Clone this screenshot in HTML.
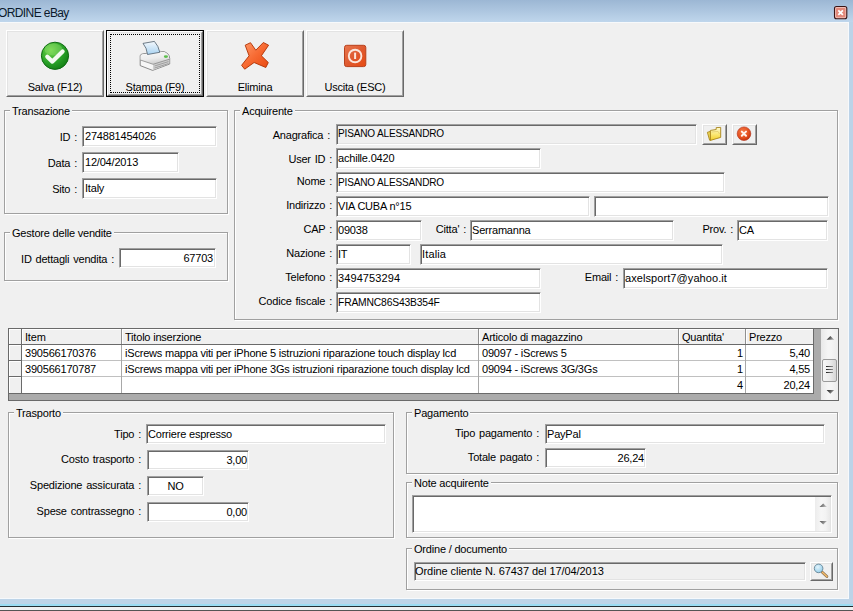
<!DOCTYPE html>
<html><head><meta charset="utf-8">
<style>
*{box-sizing:border-box;margin:0;padding:0}
html,body{width:853px;height:611px;overflow:hidden;background:#f0f0f0}
body{position:relative;font-family:"Liberation Sans",sans-serif;font-size:11px;color:#000;line-height:13px;letter-spacing:-0.2px}
.a{position:absolute}
#title{left:0;top:0;width:853px;height:22px;background:linear-gradient(#9cb7d4,#bfd6ec)}
#ttext{left:-2px;top:6px;font-size:12px;line-height:15px;color:#0c1a2c;letter-spacing:-0.6px;white-space:nowrap}
#close{left:834px;top:6px;width:14px;height:13px;border:1px solid #3a1a1a;border-radius:2px;background:linear-gradient(#f2b5ad,#d9807a)}
#rb{left:849px;top:22px;width:4px;height:589px;background:#bcd3e8;box-shadow:-1px 0 0 #f6f9fc}
#bb{left:0;top:599px;width:853px;height:12px;background:linear-gradient(#bdd4e8 0,#bdd4e8 5px,#9bdcf3 5px,#9bdcf3 7px,#222e33 7px,#222e33 8px,#eef0f2 8px,#eef0f2 11px,#555 11px)}
.btn{position:absolute;border-top:1px solid #fff;border-left:1px solid #fff;border-right:1px solid #696969;border-bottom:1px solid #696969;background:#f0f0f0}
.btn::after{content:"";position:absolute;left:0;top:0;right:0;bottom:0;border:1px solid;border-color:#e3e3e3 #a0a0a0 #a0a0a0 #e3e3e3}
.btxt{position:absolute;left:0;right:0;top:50px;text-align:center;white-space:nowrap}
.grp{position:absolute;border:1px solid #a0a0a0;box-shadow:inset 1px 1px 0 #fff,1px 1px 0 #fff}
.gt{position:absolute;top:-6px;background:#f0f0f0;padding:0 2px 0 2px;white-space:nowrap;line-height:13px}
.f{position:absolute;background:#fff;border:1px solid;border-color:#a0a0a0 #fff #fff #a0a0a0;box-shadow:inset 1px 1px 0 #696969,inset -1px -1px 0 #e3e3e3;white-space:nowrap;overflow:hidden;padding:3px 0 0 1px;line-height:13px}
.f.p2{padding-top:2px}
.f.g{background:#f0f0f0}
.f.r{text-align:right;padding-right:2px;padding-left:0}
.gc{position:absolute;white-space:nowrap}
.l{position:absolute;white-space:nowrap;text-align:right;word-spacing:1px}
</style></head><body>
<div id="title" class="a"></div>
<div id="ttext" class="a">ORDINE eBay</div>
<div id="rb" class="a"></div>
<div class="a" style="left:0;top:22px;width:849px;height:1px;background:#f7f9fb"></div>
<div id="bb" class="a"></div>
<div class="a" style="left:0;top:598px;width:849px;height:1px;background:#f6f9fc"></div>

<!-- toolbar -->
<div class="btn" style="left:6px;top:30px;width:98px;height:67px"><div class="btxt">Salva (F12)</div></div>
<div class="a" style="left:106px;top:30px;width:98px;height:67px;border:1px solid #000"></div>
<div class="btn" style="left:107px;top:31px;width:96px;height:65px"><div class="btxt" style="top:49px">Stampa (F9)</div></div>
<div class="a" style="left:110px;top:34px;width:90px;height:59px;border:1px dotted #000"></div>
<div class="btn" style="left:206px;top:30px;width:98px;height:67px"><div class="btxt">Elimina</div></div>
<div class="btn" style="left:306px;top:30px;width:98px;height:67px"><div class="btxt">Uscita (ESC)</div></div>

<!-- Transazione -->
<div class="grp" style="left:4px;top:110px;width:224px;height:104px"><div class="gt" style="left:5px">Transazione</div></div>
<div class="l" style="right:776px;top:131px">ID :</div>
<div class="f" style="left:82px;top:126px;width:135px;height:21px;padding-left:2px">274881454026</div>
<div class="l" style="right:776px;top:157px">Data :</div>
<div class="f" style="left:82px;top:152px;width:97px;height:21px;padding-left:2px">12/04/2013</div>
<div class="l" style="right:776px;top:183px">Sito :</div>
<div class="f" style="left:82px;top:178px;width:135px;height:21px;padding-left:2px">Italy</div>

<div class="grp" style="left:4px;top:232px;width:224px;height:49px"><div class="gt" style="left:5px">Gestore delle vendite</div></div>
<div class="l" style="right:739px;top:253px">ID dettagli vendita :</div>
<div class="f r" style="left:119px;top:248px;width:97px;height:20px">67703</div>

<!-- Acquirente -->
<div class="grp" style="left:234px;top:110px;width:604px;height:210px"><div class="gt" style="left:5px">Acquirente</div></div>
<div class="l" style="right:523px;top:129px">Anagrafica :</div>
<div class="f g p2" style="left:336px;top:124px;width:361px;height:21px"><span style="display:inline-block;transform:scaleX(0.915);transform-origin:0 0">PISANO ALESSANDRO</span></div>
<div class="btn" style="left:702px;top:124px;width:25px;height:21px"></div>
<div class="btn" style="left:732px;top:124px;width:25px;height:21px"></div>
<div class="l" style="right:521px;top:153px">User ID :</div>
<div class="f" style="left:336px;top:148px;width:205px;height:21px">achille.0420</div>
<div class="l" style="right:521px;top:175px">Nome :</div>
<div class="f" style="left:336px;top:172px;width:389px;height:21px"><span style="display:inline-block;transform:scaleX(0.915);transform-origin:0 0">PISANO ALESSANDRO</span></div>
<div class="l" style="right:521px;top:199px">Indirizzo :</div>
<div class="f" style="left:336px;top:196px;width:254px;height:21px">VIA CUBA n°15</div>
<div class="f" style="left:594px;top:196px;width:235px;height:21px"></div>
<div class="l" style="right:521px;top:223px">CAP :</div>
<div class="f" style="left:336px;top:220px;width:86px;height:21px">09038</div>
<div class="l" style="right:387px;top:223px">Citta' :</div>
<div class="f" style="left:470px;top:220px;width:204px;height:21px">Serramanna</div>
<div class="l" style="right:120px;top:223px">Prov. :</div>
<div class="f" style="left:737px;top:220px;width:91px;height:21px">CA</div>
<div class="l" style="right:521px;top:247px">Nazione :</div>
<div class="f" style="left:336px;top:244px;width:75px;height:21px">IT</div>
<div class="f" style="left:420px;top:244px;width:303px;height:21px;letter-spacing:0.15px">Italia</div>
<div class="l" style="right:521px;top:271px">Telefono :</div>
<div class="f" style="left:336px;top:268px;width:205px;height:21px;letter-spacing:0.1px">3494753294</div>
<div class="l" style="right:235px;top:271px">Email :</div>
<div class="f" style="left:623px;top:268px;width:205px;height:21px;letter-spacing:0.08px">axelsport7@yahoo.it</div>
<div class="l" style="right:521px;top:295px">Codice fiscale :</div>
<div class="f" style="left:336px;top:292px;width:205px;height:21px"><span style="display:inline-block;transform:scaleX(0.94);transform-origin:0 0">FRAMNC86S43B354F</span></div>

<!-- grid -->
<div class="a" style="left:8px;top:328px;width:831px;height:73px;border:1px solid #6a6a6a;background:#ababab"></div>
<div class="a" style="left:9px;top:329px;width:805px;height:65px;background:#fff"></div>
<div class="a" style="left:9px;top:329px;width:804px;height:15px;background:#f0f0f0"></div>
<div class="a" style="left:9px;top:329px;width:12px;height:64px;background:#f0f0f0"></div>
<div class="a" style="left:9px;top:329px;width:804px;height:1px;background:#fff"></div>
<div class="a" style="left:9px;top:329px;width:1px;height:64px;background:#fff"></div>
<div class="a" style="left:9px;top:345px;width:12px;height:1px;background:#fff"></div>
<div class="a" style="left:9px;top:361px;width:12px;height:1px;background:#fff"></div>
<div class="a" style="left:9px;top:377px;width:12px;height:1px;background:#fff"></div>
<div class="a" style="left:22px;top:329px;width:1px;height:15px;background:#fff"></div>
<div class="a" style="left:122px;top:329px;width:1px;height:15px;background:#fff"></div>
<div class="a" style="left:479px;top:329px;width:1px;height:15px;background:#fff"></div>
<div class="a" style="left:679px;top:329px;width:1px;height:15px;background:#fff"></div>
<div class="a" style="left:746px;top:329px;width:1px;height:15px;background:#fff"></div>
<div class="a" style="left:22px;top:360px;width:791px;height:1px;background:#c0c0c0"></div>
<div class="a" style="left:22px;top:376px;width:791px;height:1px;background:#c0c0c0"></div>
<div class="a" style="left:121px;top:345px;width:1px;height:48px;background:#a8a8a8"></div>
<div class="a" style="left:478px;top:345px;width:1px;height:48px;background:#a8a8a8"></div>
<div class="a" style="left:678px;top:345px;width:1px;height:48px;background:#a8a8a8"></div>
<div class="a" style="left:745px;top:345px;width:1px;height:48px;background:#a8a8a8"></div>
<div class="a" style="left:121px;top:329px;width:1px;height:15px;background:#909090"></div>
<div class="a" style="left:478px;top:329px;width:1px;height:15px;background:#909090"></div>
<div class="a" style="left:678px;top:329px;width:1px;height:15px;background:#909090"></div>
<div class="a" style="left:745px;top:329px;width:1px;height:15px;background:#909090"></div>
<div class="a" style="left:9px;top:344px;width:804px;height:1px;background:#6a6a6a"></div>
<div class="a" style="left:9px;top:360px;width:12px;height:1px;background:#6a6a6a"></div>
<div class="a" style="left:9px;top:376px;width:12px;height:1px;background:#6a6a6a"></div>
<div class="a" style="left:21px;top:329px;width:1px;height:64px;background:#6a6a6a"></div>
<div class="a" style="left:813px;top:329px;width:1px;height:65px;background:#6a6a6a"></div>
<div class="a" style="left:9px;top:393px;width:805px;height:1px;background:#6a6a6a"></div>
<div class="a" style="left:821px;top:329px;width:17px;height:71px;background:linear-gradient(90deg,#e9e9e9,#f5f5f5 40%,#f5f5f5 60%,#ececec)"></div>
<div class="a" style="left:822px;top:359px;width:15px;height:23px;border:1px solid #9b9b9b;border-radius:2px;background:linear-gradient(90deg,#f6f6f6,#ececec 50%,#d6d6d6)"></div>
<div class="a" style="left:826px;top:366px;width:7px;height:1px;background:linear-gradient(90deg,#202020,#909090)"></div>
<div class="a" style="left:826px;top:369px;width:7px;height:1px;background:linear-gradient(90deg,#202020,#909090)"></div>
<div class="a" style="left:826px;top:372px;width:7px;height:1px;background:linear-gradient(90deg,#202020,#909090)"></div>
<div class="gc" style="left:25px;top:331px">Item</div>
<div class="gc" style="left:125px;top:331px">Titolo inserzione</div>
<div class="gc" style="left:482px;top:331px">Articolo di magazzino</div>
<div class="gc" style="left:682px;top:331px">Quantita'</div>
<div class="gc" style="left:749px;top:331px">Prezzo</div>
<div class="gc" style="left:25px;top:347px">390566170376</div>
<div class="gc" style="left:125px;top:347px">iScrews mappa viti per iPhone 5 istruzioni riparazione touch display lcd</div>
<div class="gc" style="left:482px;top:347px">09097 - iScrews 5</div>
<div class="gc" style="right:110px;top:347px">1</div>
<div class="gc" style="right:43px;top:347px">5,40</div>
<div class="gc" style="left:25px;top:363px">390566170787</div>
<div class="gc" style="left:125px;top:363px">iScrews mappa viti per iPhone 3Gs istruzioni riparazione touch display lcd</div>
<div class="gc" style="left:482px;top:363px">09094 - iScrews 3G/3Gs</div>
<div class="gc" style="right:110px;top:363px">1</div>
<div class="gc" style="right:43px;top:363px">4,55</div>
<div class="gc" style="right:110px;top:379px">4</div>
<div class="gc" style="right:43px;top:379px">20,24</div>
<!-- Trasporto -->
<div class="grp" style="left:8px;top:412px;width:386px;height:126px"><div class="gt" style="left:5px">Trasporto</div></div>
<div class="l" style="right:712px;top:428px">Tipo :</div>
<div class="f" style="left:146px;top:424px;width:240px;height:20px">Corriere espresso</div>
<div class="l" style="right:712px;top:453px">Costo trasporto :</div>
<div class="f r" style="left:147px;top:450px;width:102px;height:20px;padding-right:1px">3,00</div>
<div class="l" style="right:712px;top:479px">Spedizione assicurata :</div>
<div class="f" style="left:147px;top:476px;width:57px;height:20px;text-align:center;padding-left:0">NO</div>
<div class="l" style="right:712px;top:505px">Spese contrassegno :</div>
<div class="f r" style="left:147px;top:502px;width:102px;height:20px;padding-right:1px">0,00</div>

<!-- Pagamento -->
<div class="grp" style="left:406px;top:412px;width:432px;height:62px"><div class="gt" style="left:5px">Pagamento</div></div>
<div class="l" style="right:314px;top:427px">Tipo pagamento :</div>
<div class="f" style="left:545px;top:424px;width:280px;height:20px">PayPal</div>
<div class="l" style="right:314px;top:451px">Totale pagato :</div>
<div class="f r" style="left:545px;top:448px;width:101px;height:20px;padding-right:1px">26,24</div>

<!-- Note -->
<div class="grp" style="left:406px;top:482px;width:432px;height:56px"><div class="gt" style="left:5px">Note acquirente</div></div>
<div class="f" style="left:412px;top:495px;width:420px;height:38px"></div>
<div class="a" style="left:815px;top:497px;width:15px;height:34px;background:linear-gradient(90deg,#ececec,#f6f6f6 40%,#f3f3f3 70%,#e8e8e8)"></div>

<!-- Ordine -->
<div class="grp" style="left:406px;top:548px;width:432px;height:42px"><div class="gt" style="left:5px">Ordine / documento</div></div>
<div class="f g p2" style="left:414px;top:562px;width:392px;height:19px;padding-left:0;letter-spacing:-0.07px">Ordine cliente N. 67437 del 17/04/2013</div>
<div class="btn" style="left:810px;top:562px;width:23px;height:19px"></div>
<svg class="a" style="left:0;top:0" width="853" height="611" viewBox="0 0 853 611">
<defs>
<linearGradient id="garr" x1="0" y1="0" x2="1" y2="0.3"><stop offset="0" stop-color="#1e1e1e"/><stop offset="0.5" stop-color="#555"/><stop offset="1" stop-color="#a8a8a8"/></linearGradient>
<radialGradient id="gck" cx="0.35" cy="0.3" r="0.8"><stop offset="0" stop-color="#74d84a"/><stop offset="0.55" stop-color="#2ca42a"/><stop offset="1" stop-color="#0f7a12"/></radialGradient>
<linearGradient id="gx" x1="0" y1="0" x2="1" y2="1"><stop offset="0" stop-color="#ff9a6a"/><stop offset="0.5" stop-color="#f76a32"/><stop offset="1" stop-color="#e84810"/></linearGradient>
<linearGradient id="gpw" x1="0" y1="0" x2="1" y2="1"><stop offset="0" stop-color="#e8774f"/><stop offset="0.5" stop-color="#df5a30"/><stop offset="1" stop-color="#e84a10"/></linearGradient>
<linearGradient id="gpap" x1="0" y1="0" x2="0" y2="1"><stop offset="0" stop-color="#f4f8fc"/><stop offset="1" stop-color="#a9d3f2"/></linearGradient>
<linearGradient id="gtop" x1="0" y1="0" x2="0.3" y2="1"><stop offset="0" stop-color="#fafafa"/><stop offset="0.6" stop-color="#ececec"/><stop offset="1" stop-color="#d0d0d0"/></linearGradient>
<linearGradient id="gfold" x1="0" y1="0" x2="0" y2="1"><stop offset="0" stop-color="#fffbd0"/><stop offset="0.5" stop-color="#fbe97a"/><stop offset="1" stop-color="#f2cf2a"/></linearGradient>
<radialGradient id="grc" cx="0.4" cy="0.35" r="0.75"><stop offset="0" stop-color="#f47a48"/><stop offset="0.6" stop-color="#e4501e"/><stop offset="1" stop-color="#b8280a"/></radialGradient>
<radialGradient id="glens" cx="0.4" cy="0.35" r="0.7"><stop offset="0" stop-color="#e2f4fc"/><stop offset="1" stop-color="#92cdea"/></radialGradient>
</defs>
<!-- check -->
<circle cx="55" cy="55.8" r="13.6" fill="url(#gck)" stroke="#0f6a12" stroke-width="1"/>
<ellipse cx="53.5" cy="49.5" rx="9" ry="6" fill="#9be57a" opacity="0.35"/>
<path d="M47.3 56.8 L52.4 61.6 L62.6 51.4" fill="none" stroke="#f4faf2" stroke-width="4.2" stroke-linecap="round" stroke-linejoin="round"/>
<!-- printer -->
<path d="M140.2 55.8 Q140.4 54.2 142.6 53.9 L160.3 51.4 Q165.2 51 167.6 53.6 Q169.6 55.6 169.7 58.4 L169.7 64 L152.6 70.4 L140.2 65.6 Z" fill="#f6f6f6" stroke="#6e6e6e" stroke-width="0.8" stroke-linejoin="round"/>
<path d="M140.6 56 Q140.8 54.6 142.8 54.3 L160.3 51.8 Q165 51.4 167.3 53.9 Q169.2 55.8 169.3 58.6 L169.3 59.4 L153.1 64.3 L140.6 60 Z" fill="url(#gtop)"/>
<path d="M153.1 64.3 L169.3 59.4 L169.3 63.8 L152.8 70 Z" fill="#cfcfcf"/>
<path d="M140.4 60 L153.1 64.3 L169.5 59.2" fill="none" stroke="#7a7a7a" stroke-width="0.7"/>
<path d="M154.5 66 L168.5 61.6 M154.5 68 L168.5 63.6" stroke="#8a8a8a" stroke-width="0.7"/>
<ellipse cx="165.9" cy="56.6" rx="2.1" ry="1.3" fill="#5cbf4c"/>
<path d="M143 43.4 L154.4 41.4 Q158.6 46 159.8 52.3 L147.5 54.5 Q146.8 47.6 143 43.4 Z" fill="url(#gpap)" stroke="#4e5e6c" stroke-width="0.8" stroke-linejoin="round"/>
<!-- X -->
<path d="M245.2 45.2 L250.5 42.7 L255.8 50.2 L263.3 42.5 L268.6 45.2 L261.4 55.8 L268.3 62.5 L265.8 67.5 L254.1 62.5 L244.7 69.2 L241.6 65.3 L249.1 55.8 Z" fill="url(#gx)" stroke="#b03000" stroke-width="0.9" stroke-linejoin="round"/>
<!-- power -->
<rect x="344.5" y="45.3" width="21.3" height="21.3" rx="2.2" fill="url(#gpw)" stroke="#b8401c" stroke-width="1"/>
<circle cx="355.1" cy="56" r="6.3" fill="none" stroke="#fbe6dc" stroke-width="1.9"/>
<rect x="354.1" y="52.6" width="2" height="6.4" fill="#fbe6dc"/>
<!-- folder -->
<path d="M707.4 132.3 L710.4 131.4 L710.4 140.4 L709.6 140.2 Z" fill="#f3dc5a" stroke="#a8841c" stroke-width="0.9" stroke-linejoin="round"/>
<path d="M710.4 130.4 L716.2 129.5 L716.2 127.6 L720.7 127.4 L720.7 137.4 L710.4 140.4 Z" fill="url(#gfold)" stroke="#a8841c" stroke-width="0.9" stroke-linejoin="round"/>
<path d="M711.5 132 L718 131.4 L719.5 134" fill="none" stroke="#d8c060" stroke-width="0.6"/>
<!-- red circle x -->
<circle cx="744" cy="133.7" r="6.8" fill="url(#grc)" stroke="#b02a10" stroke-width="0.6"/>
<path d="M741.8 131.6 L746 135.8 M746 131.6 L741.8 135.8" stroke="#fff4ee" stroke-width="2" stroke-linecap="round"/>
<!-- magnifier -->
<path d="M822.3 572.3 L826.9 576.6" stroke="#8c7050" stroke-width="2.8" stroke-linecap="round"/>
<path d="M822.3 572.3 L826.9 576.6" stroke="#f4bc6a" stroke-width="1.4" stroke-linecap="round"/>
<circle cx="818.6" cy="568.4" r="4.3" fill="url(#glens)" stroke="#5c7a8a" stroke-width="0.8"/>
<path d="M826.6 339.8 L830.4 336 L834.2 339.8 Z" fill="url(#garr)"/>
<path d="M826.6 390 L830.4 393.8 L834.2 390 Z" fill="url(#garr)"/>
<path d="M819.5 507 L823.2 503.4 L826.9 507 Z" fill="url(#garr)" opacity="0.75"/>
<path d="M819.5 521 L823.2 524.6 L826.9 521 Z" fill="url(#garr)" opacity="0.75"/>
<!-- close -->
<rect x="834.5" y="6.5" width="12.3" height="12.2" rx="2" fill="#f2bdb4" stroke="#3a1414" stroke-width="1.1"/>
<rect x="836" y="8" width="9.3" height="9.2" rx="1" fill="#e2887a"/>
<path d="M838.3 10.3 L842.9 14.9 M842.9 10.3 L838.3 14.9" stroke="#fff" stroke-width="1.7"/>
</svg>
</body></html>
